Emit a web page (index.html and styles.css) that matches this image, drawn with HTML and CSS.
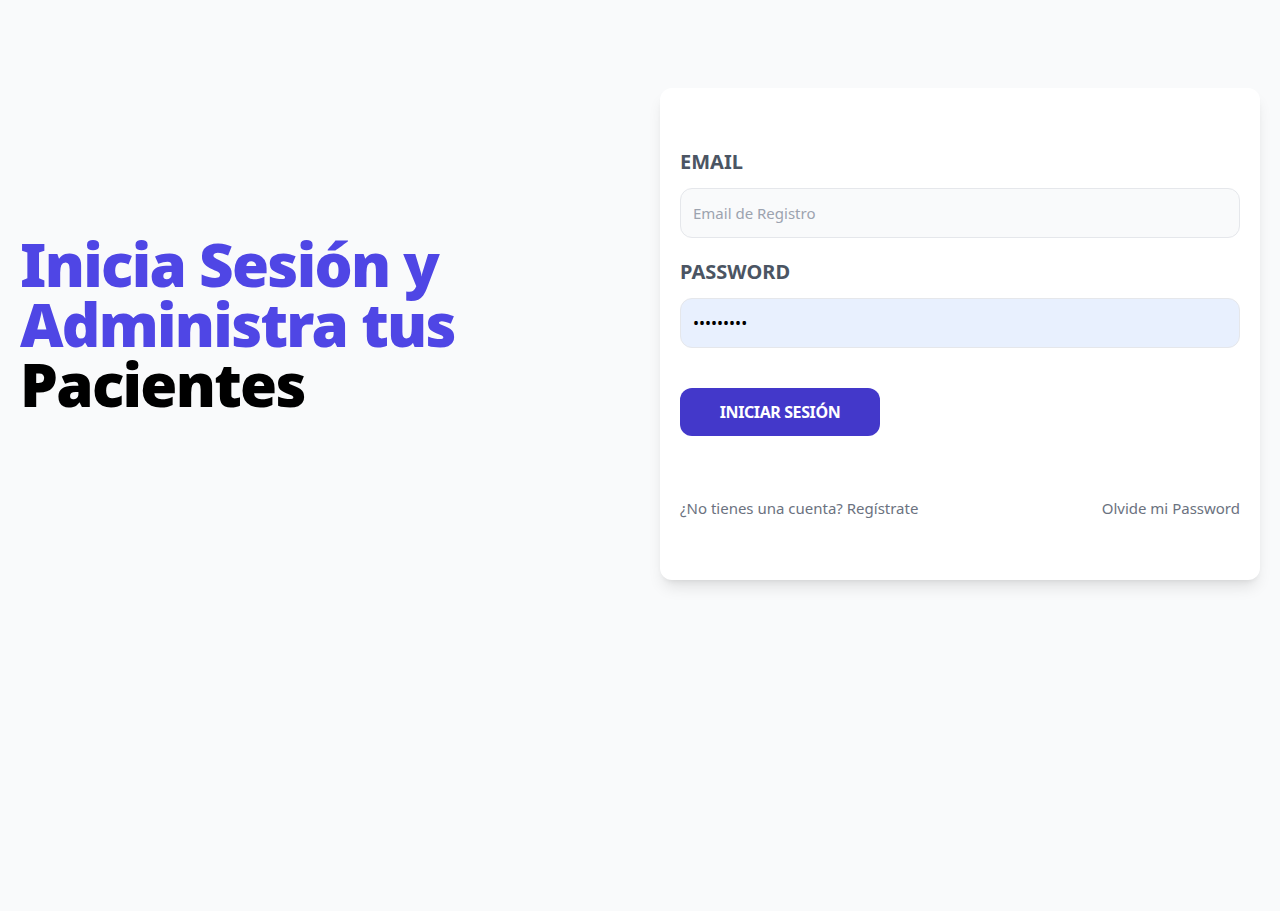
FILE: index.html
```html
<!DOCTYPE html>
<html lang="es">
<head>
<meta charset="utf-8">
<title>Iniciar Sesión</title>
<link rel="stylesheet" href="styles.css">
</head>
<body>
<main class="container">
  <div class="intro">
    <h1 class="title">Inicia Sesión y Administra tus <span class="dark">Pacientes</span></h1>
  </div>
  <div class="card">
    <form class="form">
      <div class="field">
        <label class="label" for="email">Email</label>
        <input id="email" class="input" type="email" placeholder="Email de Registro">
      </div>
      <div class="field">
        <label class="label" for="password">Password</label>
        <input id="password" class="input input-filled" type="password" value="123456789">
      </div>
      <input type="submit" class="button" value="Iniciar Sesión">
    </form>
    <nav class="links">
      <a class="link" href="#">¿No tienes una cuenta? Regístrate</a>
      <a class="link" href="#">Olvide mi Password</a>
    </nav>
  </div>
</main>
</body>
</html>
```
FILE: styles.css
```css
* { box-sizing: border-box; }
html, body { margin: 0; padding: 0; }
body {
  background: #f9fafb;
  font-family: "Noto Sans", "Open Sans", sans-serif;
  font-size: 15px;
  line-height: 24px;
}
.container {
  display: grid;
  grid-template-columns: 1fr 1fr;
  column-gap: 40px;
  align-items: center;
  margin-top: 48px;
  padding: 20px;
}
.title {
  margin: 0;
  font-size: 60px;
  line-height: 60px;
  font-weight: 900;
  letter-spacing: -1.7px;
  color: #4f46e5;
}
.dark { color: #000; }
.card {
  margin-top: 20px;
  background: #fff;
  border-radius: 12px;
  padding: 40px 20px;
  box-shadow: 0 10px 15px -3px rgba(0,0,0,.1), 0 4px 6px -4px rgba(0,0,0,.1);
}
.form { margin: 0; line-height: 24px; }
.field { margin: 20px 0; }
.label {
  display: block;
  text-transform: uppercase;
  color: #4b5563;
  font-weight: 700;
  font-size: 20px;
  line-height: 28px;
}
.input {
  display: block;
  width: 100%;
  margin-top: 12px;
  padding: 12px;
  border: 1px solid #e5e7eb;
  border-radius: 12px;
  background: #f9fafb;
  font-family: inherit;
  font-size: 15px;
  line-height: 24px;
  height: 50px;
  color: #000;
  outline: none;
}
.input::placeholder { color: #9ca3af; }
.input-filled { background: #e8f0fe; font-size: 16px; }
.button {
  display: inline-block;
  vertical-align: top;
  margin-top: 20px;
  width: 200px;
  height: 48px;
  background: #4338ca;
  color: #fff;
  border: 0;
  border-radius: 12px;
  padding: 12px 0;
  font-family: inherit;
  font-size: 16px;
  line-height: 24px;
  font-weight: 700;
  letter-spacing: -0.4px;
  text-transform: uppercase;
  cursor: pointer;
}
.links {
  margin-top: 40px;
  display: flex;
  justify-content: space-between;
}
.link {
  display: block;
  margin: 20px 0;
  color: #6b7280;
  text-decoration: none;
}
```
